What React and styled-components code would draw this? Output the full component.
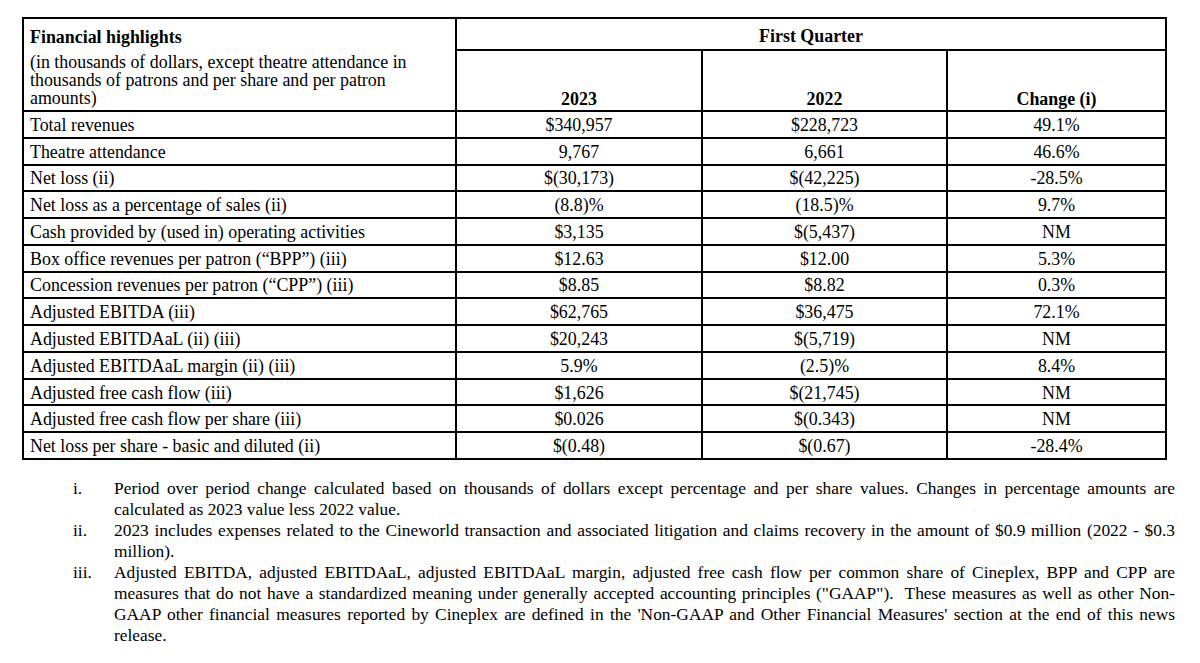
import styled, { createGlobalStyle } from 'styled-components';

const GlobalStyle = createGlobalStyle`
  html, body {
    margin: 0;
    padding: 0;
    background: #ffffff;
  }

  body {
    font-family: "Liberation Serif", "Times New Roman", serif;
    color: #000000;
  }
`;

const rows = [
  ['Total revenues', '$340,957', '$228,723', '49.1%'],
  ['Theatre attendance', '9,767', '6,661', '46.6%'],
  ['Net loss (ii)', '$(30,173)', '$(42,225)', '-28.5%'],
  ['Net loss as a percentage of sales (ii)', '(8.8)%', '(18.5)%', '9.7%'],
  ['Cash provided by (used in) operating activities', '$3,135', '$(5,437)', 'NM'],
  ['Box office revenues per patron (“BPP”) (iii)', '$12.63', '$12.00', '5.3%'],
  ['Concession revenues per patron (“CPP”) (iii)', '$8.85', '$8.82', '0.3%'],
  ['Adjusted EBITDA (iii)', '$62,765', '$36,475', '72.1%'],
  ['Adjusted EBITDAaL (ii) (iii)', '$20,243', '$(5,719)', 'NM'],
  ['Adjusted EBITDAaL margin (ii) (iii)', '5.9%', '(2.5)%', '8.4%'],
  ['Adjusted free cash flow (iii)', '$1,626', '$(21,745)', 'NM'],
  ['Adjusted free cash flow per share (iii)', '$0.026', '$(0.343)', 'NM'],
  ['Net loss per share - basic and diluted (ii)', '$(0.48)', '$(0.67)', '-28.4%'],
];

const notes = [
  {
    mark: 'i.',
    text: 'Period over period change calculated based on thousands of dollars except percentage and per share values. Changes in percentage amounts are calculated as 2023 value less 2022 value.',
  },
  {
    mark: 'ii.',
    text: '2023 includes expenses related to the Cineworld transaction and associated litigation and claims recovery in the amount of $0.9 million (2022 - $0.3 million).',
  },
  {
    mark: 'iii.',
    text: 'Adjusted EBITDA, adjusted EBITDAaL, adjusted EBITDAaL margin, adjusted free cash flow per common share of Cineplex, BPP and CPP are measures that do not have a standardized meaning under generally accepted accounting principles ("GAAP").\u00a0 These measures as well as other Non-GAAP other financial measures reported by Cineplex are defined in the \'Non-GAAP and Other Financial Measures\' section at the end of this news release.',
  },
];

export default function App() {
  return (
    <Page>
      <GlobalStyle />
      <Table>
        <colgroup>
          <col style={{ width: 433 }} />
          <col style={{ width: 246 }} />
          <col style={{ width: 245 }} />
          <col style={{ width: 219 }} />
        </colgroup>
        <thead>
          <TopRow>
            <LabelHead rowSpan={2}>
              <Title>Financial highlights</Title>
              <Units>
                (in thousands of dollars, except theatre attendance in
                <br />
                thousands of patrons and per share and per patron
                <br />
                amounts)
              </Units>
            </LabelHead>
            <GroupHead colSpan={3}>First Quarter</GroupHead>
          </TopRow>
          <SubRow>
            <ColHead>2023</ColHead>
            <ColHead>2022</ColHead>
            <ColHead>Change (i)</ColHead>
          </SubRow>
        </thead>
        <tbody>
          {rows.map(([label, a, b, change]) => (
            <DataRow key={label}>
              <LabelCell>{label}</LabelCell>
              <ValueCell>{a}</ValueCell>
              <ValueCell>{b}</ValueCell>
              <ValueCell>{change}</ValueCell>
            </DataRow>
          ))}
        </tbody>
      </Table>

      <Notes>
        {notes.map((note) => (
          <Note key={note.mark}>
            <Mark>{note.mark}</Mark>
            <NoteText>{note.text}</NoteText>
          </Note>
        ))}
      </Notes>
    </Page>
  );
}

const Page = styled.div`
    padding: 17px 0 0 22px;
`;

const Table = styled.table`
    width: 1143px;
    table-layout: fixed;
    border-collapse: collapse;
    border: 2px solid #000;
    font-size: 17.9px;
    line-height: 18px;

    td, th {
        border: 2px solid #000;
    }
`;

const TopRow = styled.tr`
    height: 32px;
`;

const SubRow = styled.tr`
    height: 61px;
`;

const DataRow = styled.tr`
    height: 26.77px;
`;

const LabelHead = styled.th`
    text-align: left;
    vertical-align: top;
    padding: 9px 6px 0;
    font-weight: normal;
`;

const Title = styled.div`
    font-weight: bold;
    margin-bottom: 7px;
`;

const Units = styled.div`
    line-height: 18px;
`;

const GroupHead = styled.th`
    font-weight: bold;
    text-align: center;
    vertical-align: middle;
    padding: 4px 0 0;
`;

const ColHead = styled.th`
    font-weight: bold;
    text-align: center;
    vertical-align: bottom;
    padding: 0 0 2px;
`;

const LabelCell = styled.td`
    text-align: left;
    padding: 1px 6px 0;
    vertical-align: middle;
    white-space: nowrap;
`;

const ValueCell = styled.td`
    text-align: center;
    padding: 1px 0 0;
    vertical-align: middle;
`;

const Notes = styled.div`
    margin: 18px 0 0 51px;
    width: 1102px;
    display: flex;
    flex-direction: column;
    font-size: 17.4px;
    line-height: 21px;
`;

const Note = styled.div`
    display: grid;
    grid-template-columns: 41px 1fr;
`;

const Mark = styled.span``;

const NoteText = styled.p`
    margin: 0;
    text-align: justify;
`;
